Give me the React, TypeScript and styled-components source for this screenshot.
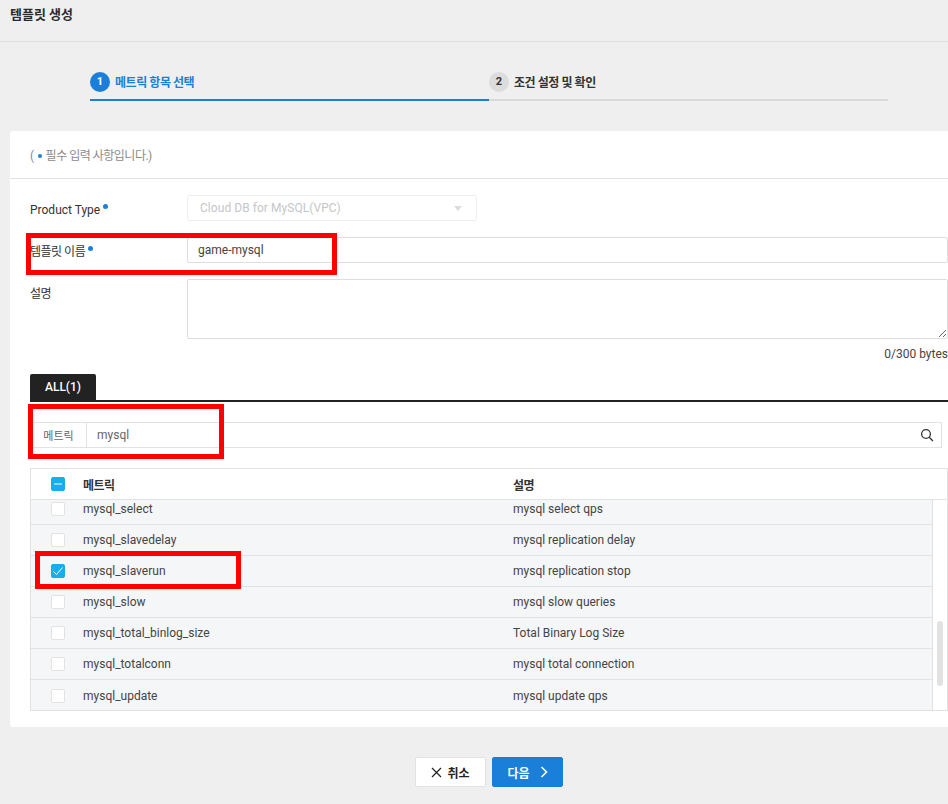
import React from "react";
import styled, { createGlobalStyle } from "styled-components";

const Global = createGlobalStyle`
  html, body { margin: 0; padding: 0; background: #efefef; }
  body { font-family: Roboto, "Noto Sans CJK KR", sans-serif; font-size: 12px; color: #333; overflow: hidden; }
  * { box-sizing: border-box; }
`;

const Page = styled.div`
  position: relative;
  width: 948px;
  height: 804px;
  overflow: hidden;
  background: #efefef;
`;
const Header = styled.header`
  height: 42px;
  padding: 6px 10px 0;
  border-bottom: 1px solid #dedede;
  font-size: 13px;
  line-height: 18px;
  font-weight: 700;
  color: #2b2b2b;
`;
const Steps = styled.div`
  display: flex;
  margin: 30px 60px 30px 90px;
`;
const Step = styled.div<{ $active?: boolean }>`
  flex: 1;
  display: flex;
  align-items: center;
  gap: 5px;
  height: 29px;
  padding-bottom: 8px;
  border-bottom: 2px solid ${(p) => (p.$active ? "#1a7fd9" : "#d9d9d9")};
  color: ${(p) => (p.$active ? "#1a7fd9" : "#333")};
  font-size: 12px;
  font-weight: 700;
  letter-spacing: -0.45px;
`;
const StepNum = styled.span<{ $active?: boolean }>`
  width: 20px;
  height: 20px;
  border-radius: 50%;
  display: flex;
  align-items: center;
  justify-content: center;
  font-size: 11px;
  font-weight: 700;
  letter-spacing: 0;
  background: ${(p) => (p.$active ? "#1a7fd9" : "#dcdcdc")};
  color: ${(p) => (p.$active ? "#fff" : "#333")};
`;
const Card = styled.main`
  margin-left: 10px;
  height: 596px;
  background: #fff;
  border-radius: 3px 0 0 3px;
`;
const Notice = styled.div`
  height: 48px;
  padding: 17px 20px 0;
  border-bottom: 1px solid #e3e3e3;
  color: #8a8a8a;
  font-size: 12px;
  line-height: 16px;
  letter-spacing: -0.5px;
`;
const Dot = styled.i`
  display: inline-block;
  width: 4px;
  height: 4px;
  margin: 0 4px;
  border-radius: 50%;
  background: #1a7fd9;
  vertical-align: 2px;
`;
const RequiredDot = styled.i`
  display: inline-block;
  width: 5px;
  height: 5px;
  margin-left: 3px;
  border-radius: 50%;
  background: #1a7fd9;
  vertical-align: 5px;
`;
const Form = styled.div`
  padding: 16px 0 0 20px;
`;
const Row = styled.div<{ $top?: boolean }>`
  display: flex;
  align-items: ${(p) => (p.$top ? "flex-start" : "center")};
  margin-bottom: 16px;
`;
const Label = styled.label<{ $top?: boolean; $ko?: boolean }>`
  width: 157px;
  flex: none;
  font-size: 12px;
  line-height: 16px;
  color: #333;
  padding-top: ${(p) => (p.$top ? "7px" : "3px")};
  letter-spacing: ${(p) => (p.$ko ? "-0.5px" : "0")};
`;
const FakeSelect = styled.div`
  width: 290px;
  height: 26px;
  display: flex;
  align-items: center;
  justify-content: space-between;
  padding: 0 14px 0 12px;
  border: 1px solid #efefef;
  border-radius: 2px;
  color: #c6c6c6;
  font-size: 12px;
  letter-spacing: 0.05px;
`;
const Caret = styled.span`
  width: 0;
  height: 0;
  border-left: 4px solid transparent;
  border-right: 4px solid transparent;
  border-top: 5px solid #dcdcdc;
`;
const TextInput = styled.input`
  flex: 1;
  min-width: 0;
  height: 26px;
  padding: 0 10px;
  border: 1px solid #dedede;
  border-radius: 2px;
  outline: none;
  font: 12px Roboto, "Noto Sans CJK KR", sans-serif;
  color: #444;
`;
const TextArea = styled.textarea`
  flex: 1;
  min-width: 0;
  height: 60px;
  display: block;
  border: 1px solid #dedede;
  border-radius: 2px;
  outline: none;
  resize: vertical;
`;
const Bytes = styled.div`
  margin-top: -9px;
  height: 16px;
  line-height: 16px;
  text-align: right;
  font-size: 12px;
  color: #444;
`;
const Tabs = styled.div`
  margin-top: 12px;
  height: 28px;
  border-bottom: 2px solid #222;
`;
const Tab = styled.div`
  width: 66px;
  height: 26px;
  display: flex;
  align-items: center;
  justify-content: center;
  background: #222;
  border-radius: 2px 2px 0 0;
  color: #fff;
  font-size: 12px;
  font-weight: 500;
`;
const Search = styled.div`
  display: flex;
  align-items: center;
  height: 26px;
  margin: 20px 6px 20px 0;
  border: 1px solid #e2e2e2;
`;
const SearchLabel = styled.div`
  width: 56px;
  height: 100%;
  flex: none;
  display: flex;
  align-items: center;
  justify-content: center;
  border-right: 1px solid #e2e2e2;
  font-size: 11px;
  color: #666;
`;
const SearchValue = styled.div`
  flex: 1;
  padding-left: 10px;
  font-size: 12px;
  color: #666;
`;
const SearchIcon = styled.svg`
  width: 14px;
  height: 14px;
  margin-right: 7px;
`;
const Table = styled.div`
  height: 243px;
  border: 1px solid #e2e2e2;
  display: flex;
  flex-direction: column;
  background: #fff;
`;
const HeadRow = styled.div`
  height: 31px;
  flex: none;
  display: flex;
  align-items: center;
  border-bottom: 1px solid #e2e2e2;
  font-size: 12px;
  font-weight: 700;
  color: #333;
  letter-spacing: -0.6px;
`;
const CheckCell = styled.div`
  width: 52px;
  flex: none;
  display: flex;
  justify-content: center;
  padding-left: 2px;
`;
const NameCell = styled.div`
  width: 430px;
  flex: none;
`;
const DescCell = styled.div`
  flex: 1;
`;
const Box = styled.span<{ $on?: boolean }>`
  width: 14px;
  height: 14px;
  display: flex;
  align-items: center;
  justify-content: center;
  border-radius: 2px;
  background: ${(p) => (p.$on ? "#17aeee" : "#fff")};
  border: 1px solid ${(p) => (p.$on ? "#17aeee" : "#e2e2e2")};
`;
const TableBody = styled.div`
  flex: 1;
  min-height: 0;
  display: flex;
`;
const RowsClip = styled.div`
  flex: 1;
  min-width: 0;
  overflow: hidden;
  border-right: 1px solid #e2e2e2;
`;
const RowsInner = styled.div`
  margin-top: -6px;
`;
const DataRow = styled.div`
  height: 31px;
  display: flex;
  align-items: center;
  background: #f5f6f8;
  border-bottom: 1px solid #e2e2e2;
  font-size: 12px;
  color: #444;
  &:last-child { border-bottom: 0; }
`;
const Scrollbar = styled.div`
  width: 14px;
  flex: none;
  padding: 121px 4px 0 4px;
`;
const Thumb = styled.div`
  width: 6px;
  height: 65px;
  border-radius: 3px;
  background: #e2e2e2;
`;
const Footer = styled.footer`
  display: flex;
  justify-content: center;
  gap: 6px;
  margin-top: 30px;
  padding-left: 30px;
`;
const CancelButton = styled.button`
  width: 71px;
  height: 30px;
  display: flex;
  align-items: center;
  justify-content: center;
  gap: 5px;
  padding: 0;
  background: #fff;
  border: 1px solid #e2e2e2;
  border-radius: 2px;
  color: #222;
  font: 700 12px Roboto, "Noto Sans CJK KR", sans-serif;
`;
const NextButton = styled(CancelButton)`
  gap: 10px;
  background: #1a7fd9;
  border-color: #1a7fd9;
  color: #fff;
`;
const Highlight = styled.div<{ $x: number; $y: number; $w: number; $h: number }>`
  position: absolute;
  left: ${(p) => p.$x}px;
  top: ${(p) => p.$y}px;
  width: ${(p) => p.$w}px;
  height: ${(p) => p.$h}px;
  border: 5px solid #f00;
  pointer-events: none;
`;

const rows = [
  ["mysql_select", "mysql select qps", false],
  ["mysql_slavedelay", "mysql replication delay", false],
  ["mysql_slaverun", "mysql replication stop", true],
  ["mysql_slow", "mysql slow queries", false],
  ["mysql_total_binlog_size", "Total Binary Log Size", false],
  ["mysql_totalconn", "mysql total connection", false],
  ["mysql_update", "mysql update qps", false],
] as const;

export default function App() {
  return (
    <Page>
      <Global />
      <Header>템플릿 생성</Header>
      <Steps>
        <Step $active><StepNum $active>1</StepNum>메트릭 항목 선택</Step>
        <Step><StepNum>2</StepNum>조건 설정 및 확인</Step>
      </Steps>
      <Card>
        <Notice>(<Dot />필수 입력 사항입니다.)</Notice>
        <Form>
          <Row>
            <Label>Product Type<RequiredDot /></Label>
            <FakeSelect>Cloud DB for MySQL(VPC)<Caret /></FakeSelect>
          </Row>
          <Row>
            <Label $ko>템플릿 이름<RequiredDot /></Label>
            <TextInput readOnly value="game-mysql" />
          </Row>
          <Row $top>
            <Label $top $ko>설명</Label>
            <TextArea readOnly />
          </Row>
          <Bytes>0/300 bytes</Bytes>
          <Tabs><Tab>ALL(1)</Tab></Tabs>
          <Search>
            <SearchLabel>메트릭</SearchLabel>
            <SearchValue>mysql</SearchValue>
            <SearchIcon viewBox="0 0 14 14" fill="none" stroke="#333" strokeWidth="1.3">
              <circle cx="6" cy="6" r="4.4" />
              <path d="M9.2 9.2 L13 13" />
            </SearchIcon>
          </Search>
          <Table>
            <HeadRow>
              <CheckCell>
                <Box $on>
                  <svg width="10" height="10" viewBox="0 0 10 10"><path d="M1 5 H9" stroke="#fff" strokeWidth="1" /></svg>
                </Box>
              </CheckCell>
              <NameCell>메트릭</NameCell>
              <DescCell>설명</DescCell>
            </HeadRow>
            <TableBody>
              <RowsClip>
                <RowsInner>
                  {rows.map(([name, desc, on]) => (
                    <DataRow key={name}>
                      <CheckCell>
                        <Box $on={on}>
                          {on && (
                            <svg width="12" height="12" viewBox="0 0 12 12" fill="none">
                              <path d="M1.5 6.5 L4.5 9.5 L10.5 2.5" stroke="#fff" strokeWidth="1" />
                            </svg>
                          )}
                        </Box>
                      </CheckCell>
                      <NameCell>{name}</NameCell>
                      <DescCell>{desc}</DescCell>
                    </DataRow>
                  ))}
                </RowsInner>
              </RowsClip>
              <Scrollbar><Thumb /></Scrollbar>
            </TableBody>
          </Table>
        </Form>
      </Card>
      <Footer>
        <CancelButton>
          <svg width="11" height="11" viewBox="0 0 11 11" fill="none"><path d="M1 1 L10 10 M10 1 L1 10" stroke="#222" strokeWidth="1.2" /></svg>
          취소
        </CancelButton>
        <NextButton>
          다음
          <svg width="8" height="12" viewBox="0 0 8 12" fill="none"><path d="M1.5 1 L6.5 6 L1.5 11" stroke="#fff" strokeWidth="1.6" /></svg>
        </NextButton>
      </Footer>
      <Highlight $x={26} $y={233} $w={311} $h={42} />
      <Highlight $x={28} $y={404} $w={196} $h={55} />
      <Highlight $x={35} $y={551} $w={206} $h={38} />
    </Page>
  );
}
